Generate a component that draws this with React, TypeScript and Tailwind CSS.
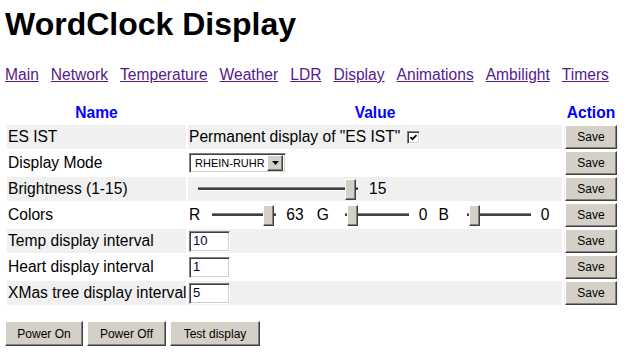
import React from 'react';

const raised =
  'bg-[#d4d0c8] border border-t-white border-l-white border-r-[#404040] border-b-[#404040] shadow-[inset_-1px_-1px_0_#808080,inset_1px_1px_0_#d4d0c8]';
const sunken =
  'bg-white border border-t-[#808080] border-l-[#808080] border-r-white border-b-white shadow-[inset_1px_1px_0_#404040,inset_-1px_-1px_0_#d4d0c8]';

const links = ['Main', 'Network', 'Temperature', 'Weather', 'LDR', 'Display', 'Animations', 'Ambilight', 'Timers'];

function Slider({ width, thumb }: { width: string; thumb: string }) {
  return (
    <div className={`relative h-[21px] shrink-0 ${width}`}>
      <div className="absolute left-0 right-0 top-[8px] h-[4px] bg-[#404040] border-t border-b border-t-[#808080] border-b-white" />
      <div className={`absolute top-0 h-[21px] w-[11px] ${raised} ${thumb}`} />
    </div>
  );
}

function TextBox({ value }: { value: string }) {
  return (
    <div className={`w-[41px] h-[21px] flex items-center pl-[3px] text-[13px] text-[#000033] ${sunken}`}>
      {value}
    </div>
  );
}

function SaveButton() {
  return (
    <button className={`w-[52px] h-[24px] text-[12px] text-black ${raised}`}>Save</button>
  );
}

export default function App() {
  const rows: { name: string; value: React.ReactNode }[] = [
    {
      name: 'ES IST',
      value: (
        <div className="flex items-center">
          <span>Permanent display of "ES IST"</span>
          <span className={`ml-[7px] w-[13px] h-[13px] flex items-center justify-center ${sunken}`}>
            <svg width="9" height="9" viewBox="0 0 9 9">
              <polyline points="1.5,4.2 3.5,6.2 7.5,2.2" fill="none" stroke="#000" strokeWidth="1.7" />
            </svg>
          </span>
        </div>
      ),
    },
    {
      name: 'Display Mode',
      value: (
        <div className={`w-[97px] h-[20px] flex items-center ${sunken}`}>
          <span className="flex-1 pl-[5px] text-[11px] leading-none whitespace-nowrap">RHEIN-RUHR</span>
          <span className={`w-[16px] h-[16px] mr-[2px] flex items-center justify-center ${raised}`}>
            <svg width="7" height="4" viewBox="0 0 7 4">
              <polygon points="0,0 7,0 3.5,4" fill="#000" />
            </svg>
          </span>
        </div>
      ),
    },
    {
      name: 'Brightness (1-15)',
      value: (
        <div className="flex items-center">
          <div className="ml-[9px]" />
          <Slider width="w-[160px]" thumb="right-[2px]" />
          <span className="ml-[11px]">15</span>
        </div>
      ),
    },
    {
      name: 'Colors',
      value: (
        <div className="flex items-center">
          <span>R</span>
          <div className="ml-[12px]" />
          <Slider width="w-[64px]" thumb="right-[2px]" />
          <span className="ml-[10px]">63</span>
          <span className="ml-[13px]">G</span>
          <div className="ml-[16px]" />
          <Slider width="w-[64px]" thumb="left-[2px]" />
          <span className="ml-[10px]">0</span>
          <span className="ml-[11px]">B</span>
          <div className="ml-[18px]" />
          <Slider width="w-[64px]" thumb="left-[2px]" />
          <span className="ml-[10px]">0</span>
        </div>
      ),
    },
    { name: 'Temp display interval', value: <TextBox value="10" /> },
    { name: 'Heart display interval', value: <TextBox value="1" /> },
    { name: 'XMas tree display interval', value: <TextBox value="5" /> },
  ];

  return (
    <div className="w-[632px] h-[352px] bg-white px-[5px] pt-[6px] font-['Liberation_Sans',Arial,sans-serif] text-black overflow-hidden">
      <h1 className="text-[32px] leading-[37px] font-bold">WordClock Display</h1>

      {/* Nav */}
      <div className="mt-[23px] flex gap-[12px] text-[15.6px] leading-[18px]">
        {links.map(l => (
          <a key={l} href="#" className="text-[#551a8b] underline">{l}</a>
        ))}
      </div>

      {/* Settings */}
      <table className="mt-[17px] w-[615px] table-fixed border-separate border-spacing-[2px] text-[15.6px] leading-[18px]">
        <thead>
          <tr className="text-[#0000ff] font-bold">
            <th className="w-[179px] h-[20px] p-0 text-center">Name</th>
            <th className="w-[374px] h-[20px] p-0 text-center">Value</th>
            <th className="w-[54px] h-[20px] p-0 text-center">Action</th>
          </tr>
        </thead>
        <tbody>
          {rows.map((row, i) => {
            const bg = i % 2 === 0 ? 'bg-[#f0f0f0]' : 'bg-white';
            return (
              <tr key={row.name}>
                <td className={`h-[24px] p-0 pl-[1px] align-middle whitespace-nowrap ${bg}`}>{row.name}</td>
                <td className={`h-[24px] p-0 pl-[1px] align-middle ${bg}`}>{row.value}</td>
                <td className={`h-[24px] p-0 align-middle text-center ${bg}`}>
                  <SaveButton />
                </td>
              </tr>
            );
          })}
        </tbody>
      </table>

      {/* Power buttons */}
      <div className="mt-[14px] flex gap-[4px]">
        <button className={`w-[78px] h-[25px] text-[12px] ${raised}`}>Power On</button>
        <button className={`w-[79px] h-[25px] text-[12px] ${raised}`}>Power Off</button>
        <button className={`w-[90px] h-[25px] text-[12px] ${raised}`}>Test display</button>
      </div>
    </div>
  );
}
